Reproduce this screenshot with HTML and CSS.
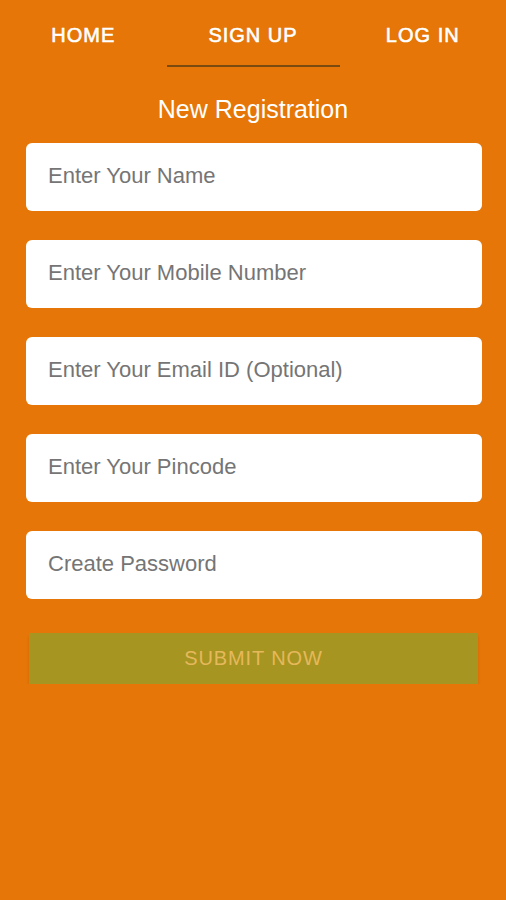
FILE: index.html
```html
<!DOCTYPE html>
<html lang="en">
<head>
  <meta charset="UTF-8">
  <meta name="viewport" content="width=device-width, initial-scale=1.0">
  <title>New Registration</title>
  <link rel="stylesheet" href="styles.css">
</head>
<body>
  <nav class="tabs">
    <a class="tab" href="#">HOME</a>
    <a class="tab active" href="#">SIGN UP</a>
    <a class="tab" href="#">LOG IN</a>
  </nav>

  <h1>New Registration</h1>

  <form class="reg" onsubmit="return false">
    <input type="text" placeholder="Enter Your Name">
    <input type="tel" placeholder="Enter Your Mobile Number">
    <input type="email" placeholder="Enter Your Email ID (Optional)">
    <input type="text" placeholder="Enter Your Pincode">
    <input type="password" placeholder="Create Password">
    <button type="submit">SUBMIT NOW</button>
  </form>
</body>
</html>
```

FILE: styles.css
```css
/* rejestracja */
body {
  font-family: 'Liberation Sans', Arial, sans-serif;
  background: #e57607;
  margin: 0;
  color: #fff;
}

.tabs {
  display: grid;
  grid-template-columns: repeat(3, 1fr);
  height: 67px;
}

.tab {
  display: flex;
  flex-direction: column;
  align-items: center;
  padding-top: 25px;
  font-size: 20px;
  line-height: 20px;
  letter-spacing: 1px;
  -webkit-text-stroke: 0.6px #fff;
  color: #fff;
  text-decoration: none;
}

.tab.active::after {
  content: '';
  display: block;
  width: 173px;
  height: 2px;
  margin-top: auto;
  background: #7b4a0e;
}

h1 {
  margin: 27px 0 19px;
  font-size: 25px;
  line-height: 30px;
  font-weight: normal;
  text-align: center;
}

.reg {
  display: flex;
  flex-direction: column;
  padding: 0 24px 0 26px;
}

.reg input {
  height: 68px;
  margin: 0 0 29px;
  padding: 0 22px 2px;
  box-sizing: border-box;
  border: none;
  border-radius: 6px;
  background: #fff;
  font-family: inherit;
  font-size: 22px;
  color: #333;
}

.reg input::placeholder {
  color: #757575;
}

.reg button {
  height: 51px;
  margin: 5px 4px 0 3px;
  border: none;
  background: #a69520;
  box-shadow: 0 3px 3px -1px rgba(120, 60, 0, 0.45);
  font-family: inherit;
  font-size: 20px;
  letter-spacing: 0.9px;
  color: #e6b85c;
}
```
